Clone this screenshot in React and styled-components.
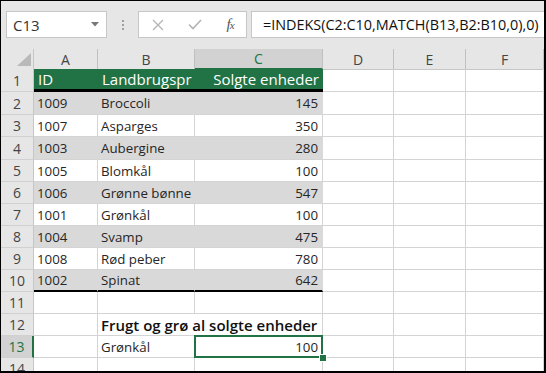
import React from 'react';
import styled, { createGlobalStyle, css } from 'styled-components';

const GREEN = '#217346';
const COLS = '33px 64px 97px 128px 71px 72px 1fr';
const LETTERS = ['A', 'B', 'C', 'D', 'E', 'F'];

const products = [
  ['1009', 'Broccoli', 145],
  ['1007', 'Asparges', 350],
  ['1003', 'Aubergine', 280],
  ['1005', 'Blomkål', 100],
  ['1006', 'Grønne bønne', 547],
  ['1001', 'Grønkål', 100],
  ['1004', 'Svamp', 475],
  ['1008', 'Rød peber', 780],
  ['1002', 'Spinat', 642],
];

const dataHeights = [23, 22, 23, 22, 22, 22, 22, 22, 22];

const GlobalStyle = createGlobalStyle`
  body {
    margin: 0;
    background: #fff;
  }
  * {
    box-sizing: border-box;
  }
`;

const Frame = styled.div`
  width: 546px;
  height: 373px;
  border: 1px solid #000;
  border-right-width: 2px;
  border-bottom-width: 2px;
  overflow: hidden;
  background: #fff;
  font-family: 'Open Sans', 'Noto Sans', sans-serif;
  display: flex;
  flex-direction: column;
`;

const TopBar = styled.div`
  flex: none;
  height: 48px;
  background: #e6e6e6;
  display: flex;
  align-items: flex-start;
  padding: 10px 0 0 5px;
`;

const NameBox = styled.div`
  width: 101px;
  height: 27px;
  background: #fff;
  border: 1px solid #c6c6c6;
  display: flex;
  align-items: center;
  justify-content: space-between;
  padding: 0 7px 0 6px;
  font-size: 15px;
  color: #333;
`;

const Dots = styled.div`
  width: 31px;
  height: 27px;
  display: flex;
  flex-direction: column;
  align-items: center;
  justify-content: center;
  gap: 2px;

  span {
    width: 2px;
    height: 2px;
    background: #a0a0a0;
  }
`;

const ActionBox = styled.div`
  width: 109px;
  height: 27px;
  background: #fff;
  border: 1px solid #c6c6c6;
  display: grid;
  grid-template-columns: 37px 38px 1fr;
  align-items: center;
  justify-items: center;
`;

const Fx = styled.span`
  font-family: 'Liberation Serif', serif;
  font-style: italic;
  font-size: 15px;
  color: #555;
  letter-spacing: -1px;

  small {
    font-size: 11px;
  }
`;

const FormulaBox = styled.div`
  flex: 1;
  height: 27px;
  margin-left: 4px;
  background: #fff;
  border: 1px solid #c6c6c6;
  border-right: none;
  display: flex;
  align-items: center;
  padding-left: 11px;
  font-size: 14.4px;
  color: #111;
  white-space: nowrap;
`;

const Row = styled.div`
  flex: none;
  display: grid;
  grid-template-columns: ${COLS};
  height: ${({ $h }) => $h}px;
`;

const Corner = styled.div`
  background: #e6e6e6;
  border-right: 1px solid #c6c6c6;
  border-bottom: 1px solid #c6c6c6;
  display: flex;
  align-items: flex-end;
  justify-content: flex-end;
  padding: 0 2px 3px 0;
`;

const ColHead = styled.div`
  background: #e6e6e6;
  border-right: 1px solid #c0c0c0;
  border-bottom: 1px solid #c6c6c6;
  display: flex;
  align-items: center;
  justify-content: center;
  font-size: 14px;
  color: #444;

  ${({ $active }) =>
    $active &&
    css`
      background: #d2d2d2;
      border-bottom: 2px solid ${GREEN};
      color: ${GREEN};
    `}
`;

const RowHead = styled.div`
  background: #e6e6e6;
  border-right: 1px solid #c6c6c6;
  border-bottom: 1px solid #d0d0d0;
  display: flex;
  align-items: center;
  justify-content: center;
  font-size: 14px;
  color: #444;

  ${({ $active }) =>
    $active &&
    css`
      background: #d2d2d2;
      border-right: 2px solid ${GREEN};
      color: ${GREEN};
    `}
`;

const Cell = styled.div`
  position: relative;
  display: flex;
  align-items: center;
  justify-content: ${({ $align }) => ($align === 'right' ? 'flex-end' : 'flex-start')};
  padding: ${({ $align }) => ($align === 'right' ? '0 4px 0 3px' : '0 3px')};
  border-right: 1px solid #d4d4d4;
  border-bottom: 1px solid #d4d4d4;
  font-size: 13.3px;
  color: #262626;
  white-space: nowrap;
  overflow: hidden;

  ${({ $stripe }) =>
    $stripe &&
    css`
      background: #d9d9d9;
      border-right-color: #d9d9d9;
    `}

  ${({ $last }) =>
    $last &&
    css`
      border-bottom: 2px solid #000;
    `}

  ${({ $selected }) =>
    $selected &&
    css`
      overflow: visible;

      &::before {
        content: '';
        position: absolute;
        inset: -1px -1px -1px -1px;
        border: 2px solid ${GREEN};
        z-index: 1;
      }

      &::after {
        content: '';
        position: absolute;
        right: -4px;
        bottom: -4px;
        width: 6px;
        height: 6px;
        background: ${GREEN};
        outline: 1px solid #fff;
        z-index: 2;
      }
    `}
`;

const TableHead = styled.div`
  display: flex;
  align-items: center;
  justify-content: ${({ $align }) => ($align === 'right' ? 'flex-end' : 'flex-start')};
  padding: 0 4px;
  background: ${GREEN};
  border-bottom: 3px solid #000;
  font-size: 15px;
  color: #fff;
  white-space: nowrap;
  overflow: hidden;
`;

const Caption = styled.div`
  grid-column: span 2;
  display: flex;
  align-items: center;
  padding: 0 3px;
  border-right: 1px solid #d4d4d4;
  border-bottom: 1px solid #d4d4d4;
  font-size: 15px;
  font-weight: 600;
  color: #111;
  white-space: nowrap;
`;

const EmptyCells = ({ count }) =>
  Array.from({ length: count }, (_, i) => <Cell key={i} />);

const App = () => {
  return (
    <Frame>
      <GlobalStyle />
      <TopBar>
        <NameBox>
          C13
          <svg width="8" height="5" viewBox="0 0 8 5">
            <path d="M0 0h8L4 4.5z" fill="#777" />
          </svg>
        </NameBox>
        <Dots>
          <span />
          <span />
          <span />
        </Dots>
        <ActionBox>
          <svg width="12" height="12" viewBox="0 0 12 12">
            <path d="M1 1l10 10M11 1L1 11" stroke="#b4b4b4" strokeWidth="1.3" />
          </svg>
          <svg width="14" height="11" viewBox="0 0 14 11">
            <path d="M1 5.5l4 4L13 1" stroke="#b4b4b4" strokeWidth="1.6" fill="none" />
          </svg>
          <Fx>
            f<small>x</small>
          </Fx>
        </ActionBox>
        <FormulaBox>=INDEKS(C2:C10,MATCH(B13,B2:B10,0),0)</FormulaBox>
      </TopBar>

      <Row $h={20}>
        <Corner>
          <svg width="14" height="13" viewBox="0 0 14 13">
            <path d="M14 0V13H0Z" fill="#b9b9b9" />
          </svg>
        </Corner>
        {LETTERS.map(l => (
          <ColHead key={l} $active={l === 'C'}>
            {l}
          </ColHead>
        ))}
      </Row>

      <Row $h={23}>
        <RowHead>1</RowHead>
        <TableHead>ID</TableHead>
        <TableHead>Landbrugspr</TableHead>
        <TableHead $align="right">Solgte enheder</TableHead>
        <EmptyCells count={3} />
      </Row>

      {products.map(([id, name, sold], i) => {
        const stripe = i % 2 === 0;
        const last = i === products.length - 1;
        return (
          <Row key={id} $h={dataHeights[i]}>
            <RowHead>{i + 2}</RowHead>
            <Cell $stripe={stripe} $last={last}>
              {id}
            </Cell>
            <Cell $stripe={stripe} $last={last}>
              {name}
            </Cell>
            <Cell $stripe={stripe} $last={last} $align="right">
              {sold}
            </Cell>
            <EmptyCells count={3} />
          </Row>
        );
      })}

      <Row $h={22}>
        <RowHead>11</RowHead>
        <EmptyCells count={6} />
      </Row>

      <Row $h={22}>
        <RowHead>12</RowHead>
        <Cell />
        <Caption>Frugt og grø al solgte enheder</Caption>
        <EmptyCells count={3} />
      </Row>

      <Row $h={22}>
        <RowHead $active>13</RowHead>
        <Cell />
        <Cell>Grønkål</Cell>
        <Cell $align="right" $selected>
          100
        </Cell>
        <EmptyCells count={3} />
      </Row>

      <Row $h={22}>
        <RowHead>14</RowHead>
        <EmptyCells count={6} />
      </Row>
    </Frame>
  );
};

export default App;
